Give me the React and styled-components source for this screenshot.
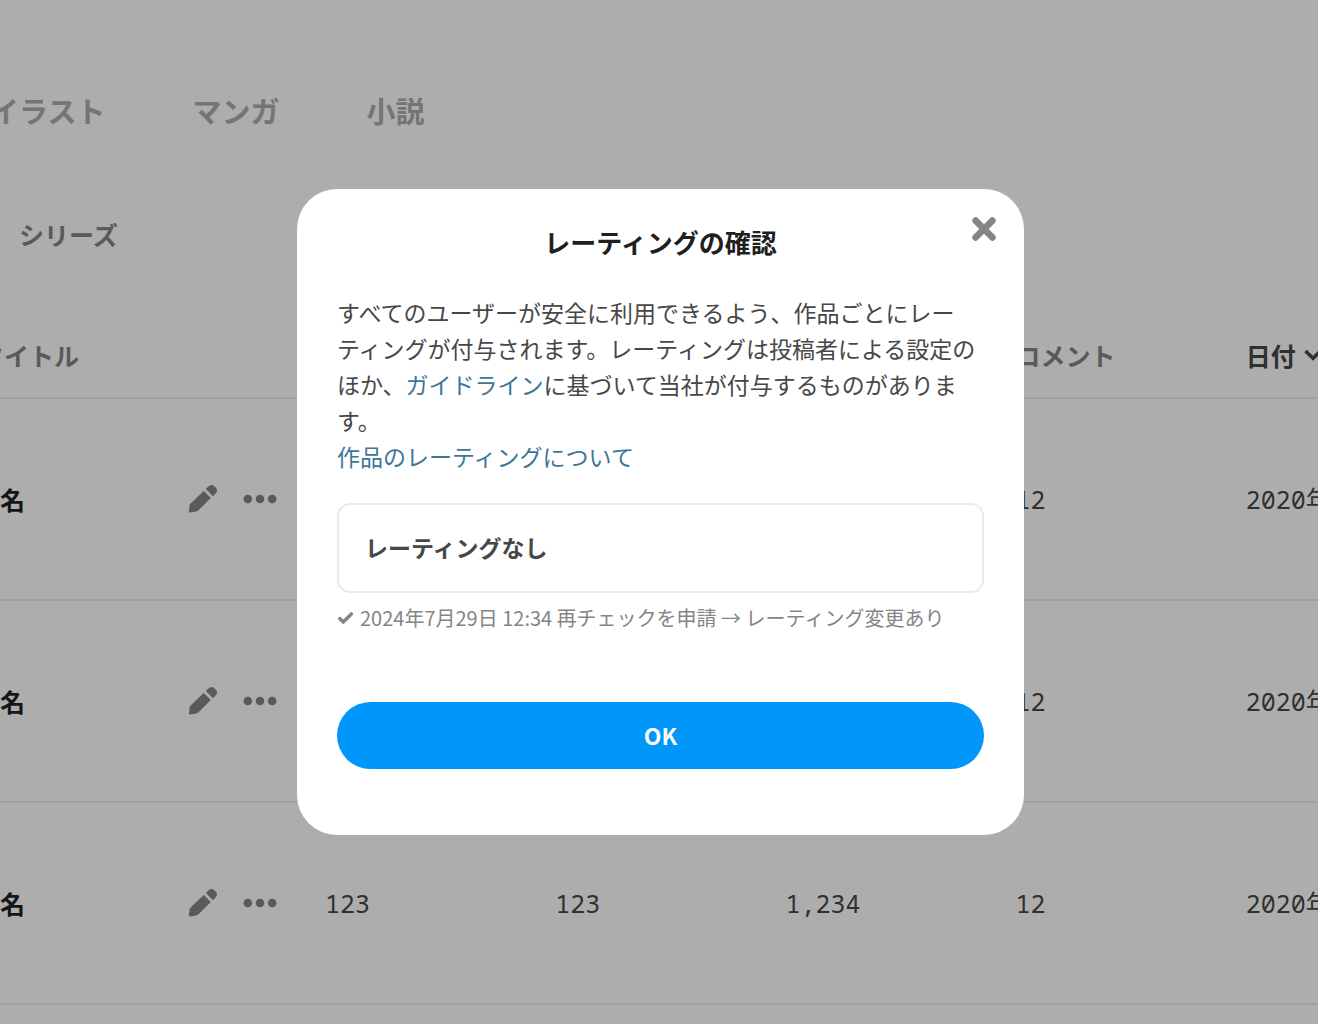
import React from "react";
import styled, { createGlobalStyle } from "styled-components";

const GlobalStyle = createGlobalStyle`
  * { box-sizing: border-box; }
  body {
    margin: 0;
    background: #fff;
    overflow: hidden;
    font-family: "Noto Sans CJK JP", sans-serif;
    line-break: strict;
  }
  button {
    padding: 0;
    border: 0;
    background: none;
    font: inherit;
    color: inherit;
    cursor: pointer;
  }
  a { text-decoration: none; }
`;

const Page = styled.main`
  height: 100vh;
  overflow: hidden;
`;

const CategoryNav = styled.nav`
  display: flex;
  gap: 87px;
  margin: 90px 0 0 -10px;
`;

const CategoryLink = styled.a`
  font-size: 29px;
  line-height: 40px;
  font-weight: 700;
  color: #adadad;
`;

const SubNav = styled.nav`
  display: flex;
  margin-top: 84px;
  padding-left: 19px;
`;

const SubLink = styled.a`
  font-size: 25px;
  line-height: 40px;
  font-weight: 700;
  color: #858585;
`;

const WorksTable = styled.table`
  width: 1476px;
  margin-top: 62px;
  table-layout: fixed;
  border-collapse: collapse;
`;

const TitleCol = styled.col`
  width: 325px;
`;

const HeadCell = styled.th`
  height: 82px;
  padding: 0 0 4px;
  border-bottom: 2px solid #ebebeb;
  text-align: left;
  font-size: 25px;
  line-height: 40px;
  font-weight: 700;
  color: ${(p) => (p.$active ? "#474747" : "#858585")};
`;

const TitleHeading = styled.span`
  display: block;
  margin-left: -21px;
`;

const SortButton = styled.button`
  display: flex;
  align-items: center;
  gap: 8px;
  font-weight: 700;
`;

const Cell = styled.td`
  height: 202px;
  padding: 0;
  border-bottom: 2px solid #ebebeb;
  font-family: "Noto Sans Mono", "DejaVu Sans Mono", "Noto Sans CJK JP", monospace;
  font-size: 25px;
  line-height: 40px;
  color: #474747;
  white-space: nowrap;
`;

const WorkCell = styled.div`
  display: flex;
  align-items: center;
  justify-content: space-between;
  padding-right: 48px;
`;

const WorkTitle = styled.span`
  font-family: "Noto Sans CJK JP", sans-serif;
  font-weight: 700;
  color: #1f1f1f;
`;

const Actions = styled.div`
  display: flex;
  align-items: center;
  gap: 25px;
`;

const IconButton = styled.button`
  display: flex;
  color: #858585;
`;

const Overlay = styled.div`
  position: fixed;
  inset: 0;
  display: grid;
  place-items: center;
  justify-content: center;
  grid-template-columns: minmax(0, 727px);
  padding-left: 2px;
  background: rgba(0, 0, 0, 0.32);
  box-shadow: inset -1px 0 #fff;
`;

const Dialog = styled.section`
  position: relative;
  display: flex;
  flex-direction: column;
  width: 100%;
  padding: 39px 40px 66px;
  border-radius: 40px;
  background: #fff;
`;

const CloseButton = styled.button`
  position: absolute;
  top: 28px;
  right: 28px;
  display: flex;
  color: #858585;
`;

const DialogTitle = styled.h1`
  margin: 0 0 38px;
  font-size: 26px;
  line-height: 28px;
  font-weight: 700;
  text-align: center;
  color: #1f1f1f;
`;

const Description = styled.p`
  margin: 0 0 29px;
  font-size: 23px;
  line-height: 36px;
  color: #474747;
`;

const TextLink = styled.a`
  color: #3d7699;
`;

const Rating = styled.div`
  padding: 23px 26px 25px;
  border: 2px solid #ebebeb;
  border-radius: 13px;
  font-size: 23px;
  line-height: 38px;
  font-weight: 700;
  color: #474747;
`;

const History = styled.div`
  display: flex;
  align-items: center;
  gap: 6px;
  margin: 10px 0 69px;
  font-size: 20px;
  line-height: 30px;
  color: #858585;
`;

const OkButton = styled.button`
  height: 67px;
  padding-bottom: 2px;
  border-radius: 34px;
  background: #0096fa;
  font-size: 23px;
  font-weight: 700;
  color: #fff;
`;

const PencilIcon = () => (
  <svg width="30" height="30" viewBox="0 0 30 30" fill="currentColor" aria-hidden="true">
    <path d="M15.800 7L22.800 14 10.800 26Q9.800 27 8.300 27.400L2.500 28.600Q.800 28.800 .900 27.200L1.600 21.200Q1.800 20 2.800 19.200Z" />
    <path d="M17.800 5L20.300 2.500Q23.500 -.500 26.300 2.200L27.700 3.600Q30.500 6.500 27.500 9.500L25 12.200Z" />
  </svg>
);

const MoreIcon = () => (
  <svg width="34" height="10" viewBox="0 0 34 10" fill="currentColor" aria-hidden="true">
    <circle cx="4.800" cy="5" r="4.300" />
    <circle cx="17" cy="5" r="4.300" />
    <circle cx="29.200" cy="5" r="4.300" />
  </svg>
);

const ChevronIcon = () => (
  <svg width="18" height="12" viewBox="0 0 18 12" fill="none" stroke="currentColor" strokeWidth="3.500" aria-hidden="true">
    <path d="M1.500 2L9 9.300 16.500 2" />
  </svg>
);

const CloseIcon = () => (
  <svg width="24" height="24" viewBox="0 0 24 24" fill="none" stroke="currentColor" strokeWidth="6.600" strokeLinecap="round" aria-hidden="true">
    <path d="M3.600 3.600L20.400 20.400M20.400 3.600L3.600 20.400" />
  </svg>
);

const CheckIcon = () => (
  <svg width="17" height="14" viewBox="0 0 17 14" fill="none" stroke="currentColor" strokeWidth="3.500" strokeLinecap="round" strokeLinejoin="round" aria-hidden="true">
    <path d="M2.700 7.600L6.300 11.100 14.400 2.900" />
  </svg>
);

const works = [
  { id: 1, title: "名", counts: ["123", "123", "1,234", "12"], date: "2020年" },
  { id: 2, title: "名", counts: ["123", "123", "1,234", "12"], date: "2020年" },
  { id: 3, title: "名", counts: ["123", "123", "1,234", "12"], date: "2020年" },
];

export default function App() {
  return (
    <>
      <GlobalStyle />
      <Page lang="ja">
        <CategoryNav>
          <CategoryLink href="#illust">イラスト</CategoryLink>
          <CategoryLink href="#manga">マンガ</CategoryLink>
          <CategoryLink href="#novel">小説</CategoryLink>
        </CategoryNav>
        <SubNav>
          <SubLink href="#series">シリーズ</SubLink>
        </SubNav>
        <WorksTable>
          <colgroup>
            <TitleCol />
            <col span={5} />
          </colgroup>
          <thead>
            <tr>
              <HeadCell><TitleHeading>タイトル</TitleHeading></HeadCell>
              <HeadCell as="td" colSpan={3} />
              <HeadCell>コメント</HeadCell>
              <HeadCell $active>
                <SortButton type="button">日付<ChevronIcon /></SortButton>
              </HeadCell>
            </tr>
          </thead>
          <tbody>
            {works.map((work) => (
              <tr key={work.id}>
                <Cell>
                  <WorkCell>
                    <WorkTitle>{work.title}</WorkTitle>
                    <Actions>
                      <IconButton type="button" aria-label="編集"><PencilIcon /></IconButton>
                      <IconButton type="button" aria-label="メニュー"><MoreIcon /></IconButton>
                    </Actions>
                  </WorkCell>
                </Cell>
                {work.counts.map((count, i) => <Cell key={i}>{count}</Cell>)}
                <Cell>{work.date}</Cell>
              </tr>
            ))}
          </tbody>
        </WorksTable>
      </Page>
      <Overlay lang="ja">
        <Dialog role="dialog" aria-modal="true" aria-labelledby="rating-title">
          <DialogTitle id="rating-title">レーティングの確認</DialogTitle>
          <CloseButton type="button" aria-label="閉じる"><CloseIcon /></CloseButton>
          <Description>
            すべてのユーザーが安全に利用できるよう、作品ごとにレーティングが付与されます。レーティングは投稿者による設定のほか、<TextLink href="#guideline">ガイドライン</TextLink>に基づいて当社が付与するものがあります。
            <br />
            <TextLink href="#about-rating">作品のレーティングについて</TextLink>
          </Description>
          <Rating>レーティングなし</Rating>
          <History>
            <CheckIcon />
            <span>2024年7月29日 12:34 再チェックを申請 → レーティング変更あり</span>
          </History>
          <OkButton type="button">OK</OkButton>
        </Dialog>
      </Overlay>
    </>
  );
}
